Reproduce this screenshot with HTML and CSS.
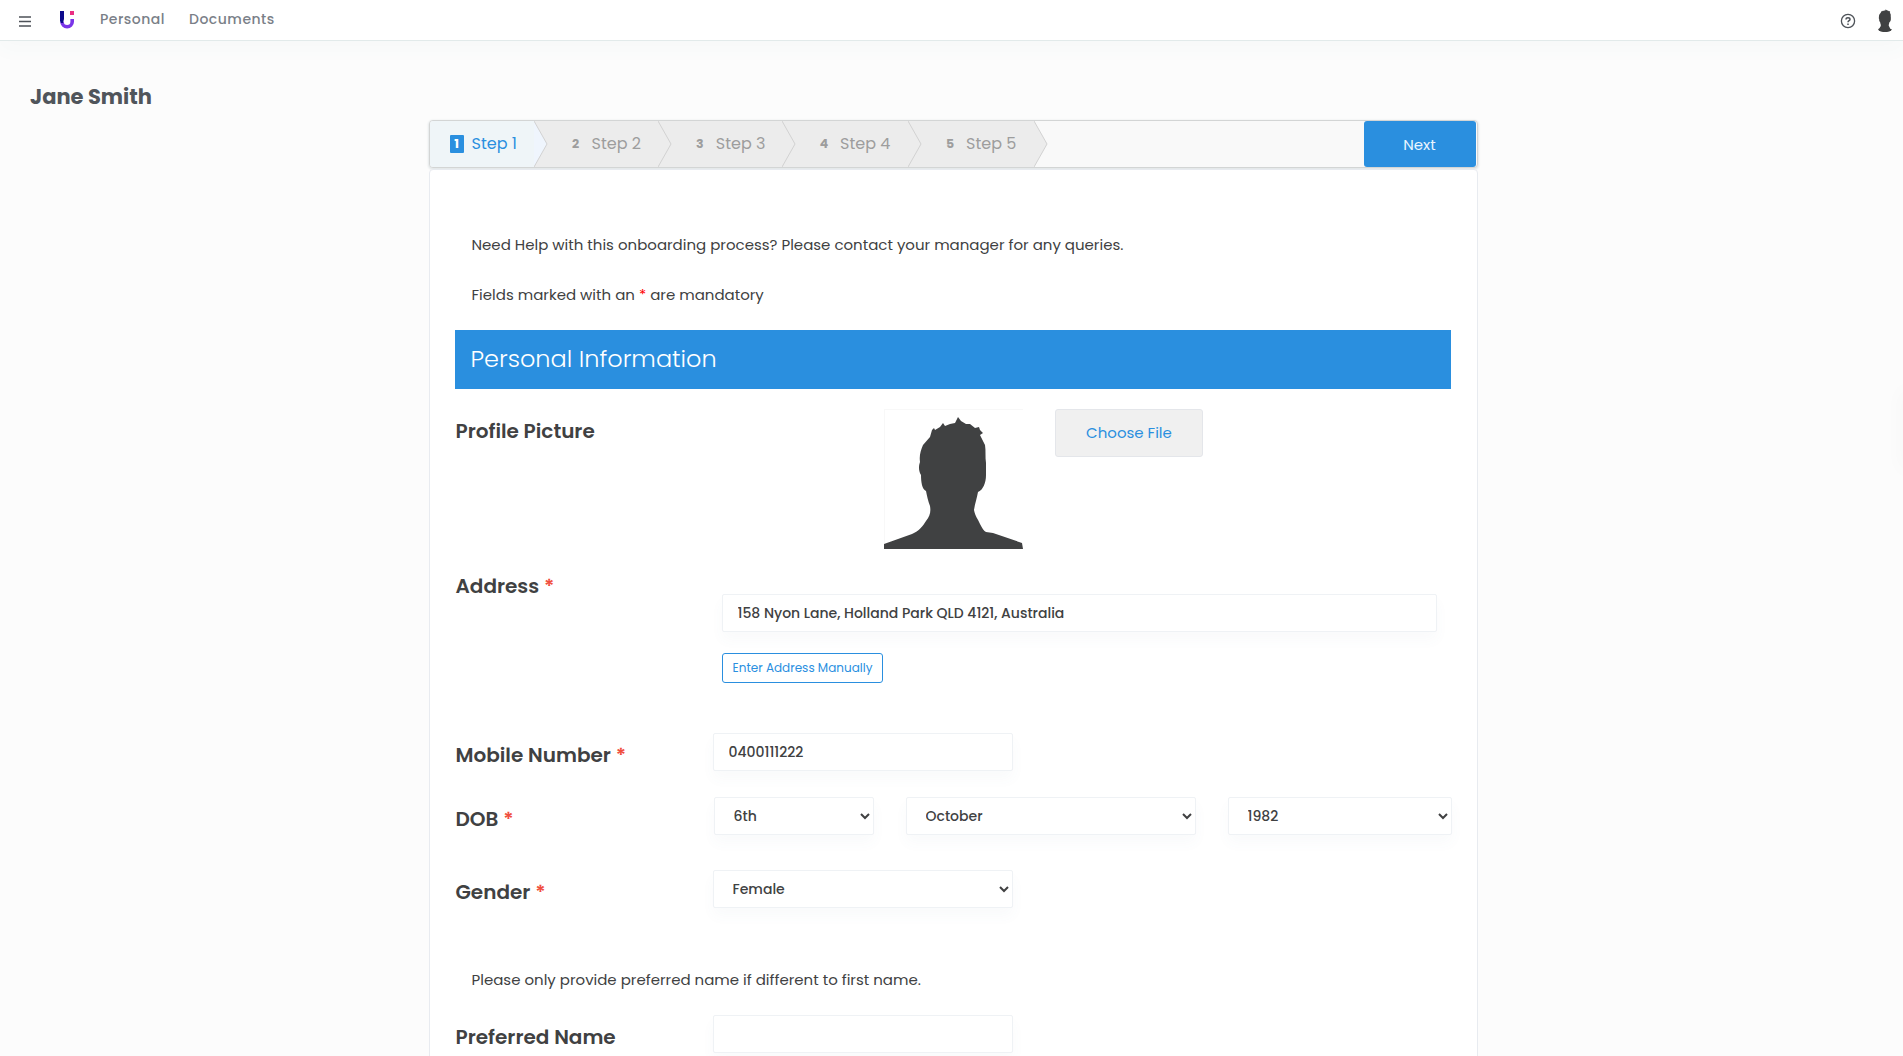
FILE: index.html
```html
<!DOCTYPE html>
<html lang="en">
<head>
    <meta charset="UTF-8">
    <meta name="viewport" content="width=device-width, initial-scale=1.0">
    <title>Onboarding</title>
    <link rel="stylesheet" href="styles.css">
</head>
<body>
    <svg class="defs" width="0" height="0">
        <symbol id="person" viewBox="0 0 139 140" preserveAspectRatio="none">
            <path d="M0 140V135L28 125C35 122 39 117 42 112C46 107 47 103 46 97C44 92 43 87 42 82C38 80 37 73 37 66C34 61 35 56 36 53C35 46 37 41 39 36L46 28L48 21L50 19L51 21L56 18L59 14L61 17L66 15L71 14L74 8L77 12L82 15L86 15L91 19L95 18L96 21L99 24L96 26L101 36C102 42 101 48 102 54V66C102 74 99 81 94 83C93 89 91 94 90 101C91 107 94 110 96 115C98 119 100 122 102 123L109 124L138 134L139 140Z"/>
        </symbol>
    </svg>

    <header class="navbar">
        <svg class="menu-icon" width="12" height="11" viewBox="0 0 12 11">
            <path d="M0 1h12M0 5.5h12M0 10h12" stroke="#4d5258" stroke-width="1.4"/>
        </svg>
        <svg class="logo" width="14" height="18" viewBox="0 0 14 18">
            <path d="M12.2 8v2.7a5.1 5.1 0 0 1-10.2 0" fill="none" stroke="#7a35e8" stroke-width="3.6"/>
            <path d="M0 0h4v8l-1 4H1L0 10z" fill="#0d0a8c"/>
            <rect x="10" y="0" width="4" height="4" fill="#ea2f83"/>
        </svg>
        <nav class="nav-links">
            <a class="nav-personal">Personal</a>
            <a class="nav-documents">Documents</a>
        </nav>
        <svg class="help-icon" width="16" height="16" viewBox="0 0 16 16" fill="none" stroke="#4d5258">
            <circle cx="8" cy="8" r="6.6" stroke-width="1.3"/>
            <path d="M6 6.5C6 4.2 10 4.2 10 6.5C10 7.8 8 7.7 8 9.3" stroke-width="1.5"/>
            <path d="M8 10.4v1.5" stroke-width="1.5"/>
        </svg>
        <svg class="user-icon" width="16" height="23"><use href="#person" width="25" height="24" x="-4.5" y="-1"/></svg>
    </header>

    <h1 class="page-title">Jane Smith</h1>

    <main class="wizard">
        <div class="steps">
            <div class="step active">
                <span class="step-no">1</span><span class="step-name">Step 1</span>
                <svg class="arrow" width="15" height="46"><path d="M0 0L13 23L0 46"/></svg>
            </div>
            <div class="step">
                <span class="step-no">2</span><span class="step-name">Step 2</span>
                <svg class="arrow" width="15" height="46"><path d="M0 0L13 23L0 46"/></svg>
            </div>
            <div class="step">
                <span class="step-no">3</span><span class="step-name">Step 3</span>
                <svg class="arrow" width="15" height="46"><path d="M0 0L13 23L0 46"/></svg>
            </div>
            <div class="step wide">
                <span class="step-no">4</span><span class="step-name">Step 4</span>
                <svg class="arrow" width="15" height="46"><path d="M0 0L13 23L0 46"/></svg>
            </div>
            <div class="step wide">
                <span class="step-no">5</span><span class="step-name">Step 5</span>
                <svg class="arrow" width="15" height="46"><path d="M0 0L13 23L0 46"/></svg>
            </div>
            <button class="next">Next</button>
        </div>

        <form class="card">
            <p class="note">Need Help with this onboarding process? Please contact your manager for any queries.</p>
            <p class="note mandatory">Fields marked with an <span class="red">*</span> are mandatory</p>

            <h2 class="banner">Personal Information</h2>

            <div class="row profile">
                <label>Profile Picture</label>
                <svg class="avatar" width="139" height="140"><use href="#person" width="139" height="140"/></svg>
                <button type="button" class="choose">Choose File</button>
            </div>

            <div class="row address">
                <label>Address <span class="req">*</span></label>
                <div class="address-fields">
                    <input type="text" class="field" value="158 Nyon Lane, Holland Park QLD 4121, Australia">
                    <button type="button" class="manual">Enter Address Manually</button>
                </div>
            </div>

            <div class="row mobile">
                <label>Mobile Number <span class="req">*</span></label>
                <input type="text" class="field short" value="0400111222">
            </div>

            <div class="row dob">
                <label>DOB <span class="req">*</span></label>
                <div class="dob-fields">
                    <select class="field"><option>6th</option></select>
                    <select class="field"><option>October</option></select>
                    <select class="field"><option>1982</option></select>
                </div>
            </div>

            <div class="row gender">
                <label>Gender <span class="req">*</span></label>
                <select class="field short"><option>Female</option></select>
            </div>

            <p class="note preferred-note">Please only provide preferred name if different to first name.</p>

            <div class="row preferred">
                <label>Preferred Name</label>
                <input type="text" class="field short">
            </div>
        </form>
    </main>
    <div class="side-tab"></div>
</body>
</html>
```

FILE: styles.css
```css
* {
    box-sizing: border-box;
}

body {
    margin: 0;
    height: 1056px;
    overflow: hidden;
    background-color: #fcfcfc;
    color: #404142;
    font-family: Poppins, Inter, sans-serif;
    font-size: 15px;
}

button, input, select {
    font-family: inherit;
    margin: 0;
}

.defs {
    position: absolute;
}

.navbar {
    display: flex;
    align-items: flex-start;
    height: 41px;
    padding: 0 10px 0 19px;
    background-color: #fff;
    border-bottom: 1px solid #e2eaea;
    box-shadow: 0 8px 20px rgba(70, 130, 120, 0.03);
}

.menu-icon {
    margin-top: 15.5px;
}

.logo {
    margin: 11px 0 0 29px;
}

.nav-links {
    display: flex;
    gap: 25px;
    margin: 7px auto 0 26px;
    color: #7a7f88;
    font-size: 14px;
    font-weight: 500;
    line-height: 24px;
    letter-spacing: 0.5px;
}

.nav-personal {
    width: 64px;
}

.help-icon {
    margin: 13px 21px 0 0;
}

.user-icon {
    margin-top: 9px;
    border-radius: 6px;
    fill: #404142;
}

.page-title {
    margin: 41px 0 0 30px;
    height: 30px;
    color: #50555b;
    font-size: 21px;
    font-weight: 700;
    line-height: 30px;
}

.wizard {
    width: 1049px;
    margin: 8px 0 0 428.5px;
}

.steps {
    display: flex;
    height: 48px;
    background-color: #f9f9f9;
    border: 1px solid #d3d5d5;
    border-radius: 4px;
    box-shadow: 0 1px 2px 1px #e4e8e9;
}

.step {
    position: relative;
    display: flex;
    align-items: center;
    width: 124.3px;
    padding: 0 0 1px 35px;
    background-color: #ececec;
    color: #9d9d9d;
}

.step.active {
    width: 104px;
    padding-left: 20px;
    background-color: #eff5f8;
    color: #2a8fdf;
    border-radius: 3px 0 0 3px;
    z-index: 5;
}

.step.wide {
    width: 126px;
}

.step-no {
    width: 14px;
    margin-right: 8px;
    font-size: 12.5px;
    font-weight: 700;
    line-height: 18px;
    text-align: center;
}

.step:not(.active) .step-no {
    margin-right: 9px;
}

.active .step-no {
    background-color: #2a8fdf;
    border-radius: 1px;
    color: #fff;
}

.step-name {
    font-size: 16px;
    white-space: nowrap;
}

/* point of the step, laid over the next one */
.arrow {
    position: absolute;
    left: 100%;
    top: 0;
    z-index: 2;
    fill: #ececec;
    stroke: #d2d2d2;
}

.active .arrow {
    fill: #eff5fd;
}

.next {
    width: 112px;
    margin-left: auto;
    margin-right: 1px;
    padding: 0;
    background-color: #2a8fdf;
    border: none;
    border-radius: 3px;
    color: #eaf6ff;
    font-size: 15px;
}

.card {
    margin-top: 1px;
    height: 900px;
    padding: 63px 25.5px 0;
    background-color: #fff;
    border: 1px solid #e8ebf0;
    border-radius: 4px;
}

.note {
    margin: 0 0 0 16.5px;
    font-size: 15px;
    line-height: 24px;
    white-space: nowrap;
}

.mandatory {
    margin-top: 26px;
}

.red {
    color: #f00;
}

.req {
    color: #f04e3e;
}

.banner {
    margin: 23px 0 0;
    height: 59px;
    padding-left: 15.5px;
    background-color: #2a8fdf;
    color: #fff;
    font-size: 24px;
    font-weight: 300;
    line-height: 57px;
}

.row {
    display: grid;
    grid-template-columns: 258px 1fr;
    align-items: start;
}

.row label {
    padding: 3px 0 0 0.5px;
    font-size: 20px;
    font-weight: 600;
    line-height: 38px;
    white-space: nowrap;
}

.profile {
    grid-template-columns: 428.5px 171.5px 148px;
    margin-top: 20px;
    height: 140px;
}

.avatar {
    fill: #404142;
    box-shadow: inset 1px 1px #f8f8f8;
}

.choose {
    height: 48px;
    padding: 0 0 2px;
    background-color: #f0f0f0;
    border: 1px solid #e4e6ea;
    border-radius: 3px;
    color: #2a8fdf;
    font-size: 15px;
}

.address {
    margin-top: 15px;
    height: 169px;
}

.address-fields {
    display: flex;
    flex-direction: column;
    align-items: flex-start;
    gap: 21px;
    width: 724px;
    padding: 30px 0 0 9px;
}

.field {
    width: 100%;
    height: 38px;
    padding: 0 14.5px;
    background-color: #fff;
    border: 1px solid #eff2f5;
    border-radius: 2px;
    box-shadow: 0 8px 14px rgba(80, 110, 130, 0.035);
    color: #404142;
    font-size: 14px;
    font-weight: 500;
}

select.field {
    padding: 0 0 0 14.5px;
}

.field.short {
    width: 300px;
}

.manual {
    width: 161px;
    height: 30px;
    padding: 0;
    background-color: #fff;
    border: 1px solid #2a8fdf;
    border-radius: 3px;
    color: #2a8fdf;
    font-size: 12px;
}

.dob {
    grid-template-columns: 259px 1fr;
    margin-top: 23px;
}

.dob-fields {
    display: grid;
    grid-template-columns: 160px 290px 224px;
    gap: 32px;
}

.gender {
    margin-top: 32px;
}

.preferred-note {
    margin-top: 57px;
}

.preferred {
    margin-top: 23px;
}

.side-tab {
    position: absolute;
    top: 390px;
    left: 1903px;
    width: 10px;
    height: 80px;
    box-shadow: 0 0 20px rgba(0, 0, 0, 0.04);
}
```
